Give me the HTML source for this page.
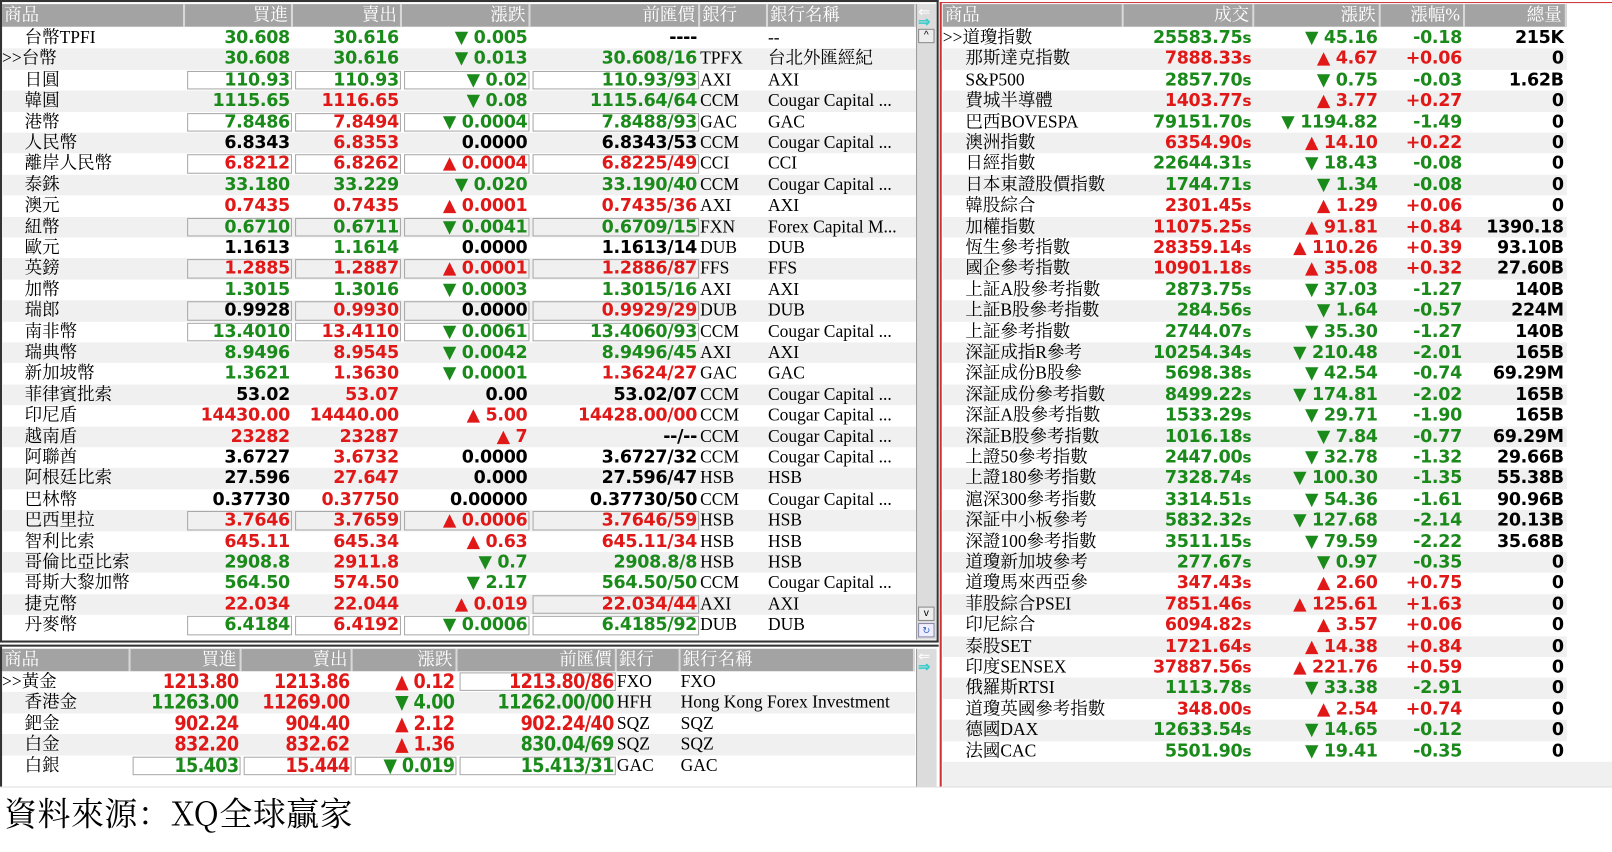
<!DOCTYPE html>
<html><head><meta charset="utf-8">
<style>
*{margin:0;padding:0;box-sizing:border-box}
html,body{width:1612px;height:852px;overflow:hidden;background:#fff}
#w{position:absolute;left:0;top:0;width:1568px;height:829px;transform:scale(1.0281);transform-origin:0 0}
.p{position:absolute;background:#fff}
.r{position:absolute;left:0;height:20.4px;display:flex;white-space:nowrap;font:bold 17px/20.4px "DejaVu Sans","Liberation Sans",sans-serif;letter-spacing:-0.3px}
.r:nth-child(odd){background:#f0f0f0}
.r>span{display:block;flex:none;text-align:right;padding-right:3px;position:relative;overflow:hidden}
.r>.n,.r>.b,.r>.m{text-align:left;font:17px/20.4px "Liberation Serif","Noto Serif CJK SC",serif;color:#000;padding-left:0;letter-spacing:0}
.r>.n{padding-left:22px}
.r>.n.s{padding-left:0}
.g{color:#1a8a1a}.d{color:#e01818}.k{color:#000}
.h{position:absolute;left:0;height:22px;display:flex;background:#a3a3a3;font:17px/22px "Liberation Serif","Noto Serif CJK SC",serif;color:#fff}
.h>span{flex:none;border-right:2px solid #d8d8d8;text-align:right;padding-right:3px}
.h>span.l{text-align:left;padding-left:2px}
.x>span.v::before{content:"";position:absolute;left:2px;right:1px;top:1px;bottom:1px;border:1px solid #a8a8a8}
.sb{position:absolute;background:#dcdcdc;border-left:1px solid #999}
.sfx{font-size:15px;font-style:normal}
.B{font:bold 19px/20.4px "DejaVu Sans Condensed","Liberation Sans Narrow","Liberation Sans",sans-serif;letter-spacing:-0.6px}
</style></head><body><div id="w">

<div class="p" style="left:0;top:0;width:913px;height:624px;border:2px double #333;border-bottom:none"></div>
<div class="h" style="top:4px;left:2px">
<span class="l" style="width:178px">商品</span><span style="width:105px">買進</span><span style="width:106px">賣出</span><span style="width:125px">漲跌</span><span style="width:165px">前匯價</span><span class="l" style="width:66px">銀行</span><span class="l" style="width:144px">銀行名稱</span>
</div>
<div class="sb" style="left:891px;top:4px;width:20px;height:618px"></div>
<div style="position:absolute;left:893px;top:5px;font:14px/12px sans-serif;color:#fff">⇐</div>
<div style="position:absolute;left:893px;top:16px;font:bold 14px/10px sans-serif;color:#3cc">⇒</div>
<div style="position:absolute;left:893px;top:28px;width:16px;height:14px;background:#eee;border:1px solid #888;font:10px/12px sans-serif;text-align:center">^</div>
<div style="position:absolute;left:893px;top:590px;width:16px;height:14px;background:#eee;border:1px solid #888;font:10px/12px sans-serif;text-align:center">v</div>
<div style="position:absolute;left:893px;top:606px;width:16px;height:14px;background:#eef;border:1px solid #88a;font:9px/12px sans-serif;text-align:center;color:#36c">↻</div>
<div style="position:absolute;left:2px;top:27px;width:889px">
<style>.L>span:nth-child(1){width:178px}.L>span:nth-child(2){width:105px}.L>span:nth-child(3){width:106px}.L>span:nth-child(4){width:125px}.L>span:nth-child(5){width:165px}.L>span:nth-child(6){width:66px}.L>span:nth-child(7){width:144px}</style>
<div class="r L" style="top:0"><span class="n">台幣TPFI</span><span class="g">30.608</span><span class="g">30.616</span><span class="g">▼ 0.005</span><span class="k">----</span><span class="b"></span><span class="m">--</span></div>
<div class="r L" style="top:20.4px"><span class="n s">&gt;&gt;台幣</span><span class="g">30.608</span><span class="g">30.616</span><span class="g">▼ 0.013</span><span class="g">30.608/16</span><span class="b">TPFX</span><span class="m">台北外匯經紀</span></div>
<div class="r L x" style="top:40.8px"><span class="n">日圓</span><span class="g v">110.93</span><span class="g v">110.93</span><span class="g v">▼ 0.02</span><span class="g v">110.93/93</span><span class="b">AXI</span><span class="m">AXI</span></div>
<div class="r L" style="top:61.2px"><span class="n">韓圓</span><span class="g">1115.65</span><span class="d">1116.65</span><span class="g">▼ 0.08</span><span class="g">1115.64/64</span><span class="b">CCM</span><span class="m">Cougar Capital ...</span></div>
<div class="r L x" style="top:81.6px"><span class="n">港幣</span><span class="g v">7.8486</span><span class="d v">7.8494</span><span class="g v">▼ 0.0004</span><span class="g v">7.8488/93</span><span class="b">GAC</span><span class="m">GAC</span></div>
<div class="r L" style="top:102px"><span class="n">人民幣</span><span class="k">6.8343</span><span class="d">6.8353</span><span class="k">0.0000</span><span class="k">6.8343/53</span><span class="b">CCM</span><span class="m">Cougar Capital ...</span></div>
<div class="r L x" style="top:122.4px"><span class="n">離岸人民幣</span><span class="d v">6.8212</span><span class="d v">6.8262</span><span class="d v">▲ 0.0004</span><span class="d v">6.8225/49</span><span class="b">CCI</span><span class="m">CCI</span></div>
<div class="r L" style="top:142.8px"><span class="n">泰銖</span><span class="g">33.180</span><span class="g">33.229</span><span class="g">▼ 0.020</span><span class="g">33.190/40</span><span class="b">CCM</span><span class="m">Cougar Capital ...</span></div>
<div class="r L" style="top:163.2px"><span class="n">澳元</span><span class="d">0.7435</span><span class="d">0.7435</span><span class="d">▲ 0.0001</span><span class="d">0.7435/36</span><span class="b">AXI</span><span class="m">AXI</span></div>
<div class="r L x" style="top:183.6px"><span class="n">紐幣</span><span class="g v">0.6710</span><span class="g v">0.6711</span><span class="g v">▼ 0.0041</span><span class="g v">0.6709/15</span><span class="b">FXN</span><span class="m">Forex Capital M...</span></div>
<div class="r L" style="top:204px"><span class="n">歐元</span><span class="k">1.1613</span><span class="g">1.1614</span><span class="k">0.0000</span><span class="k">1.1613/14</span><span class="b">DUB</span><span class="m">DUB</span></div>
<div class="r L x" style="top:224.4px"><span class="n">英鎊</span><span class="d v">1.2885</span><span class="d v">1.2887</span><span class="d v">▲ 0.0001</span><span class="d v">1.2886/87</span><span class="b">FFS</span><span class="m">FFS</span></div>
<div class="r L" style="top:244.8px"><span class="n">加幣</span><span class="g">1.3015</span><span class="g">1.3016</span><span class="g">▼ 0.0003</span><span class="g">1.3015/16</span><span class="b">AXI</span><span class="m">AXI</span></div>
<div class="r L x" style="top:265.2px"><span class="n">瑞郎</span><span class="k v">0.9928</span><span class="d v">0.9930</span><span class="k v">0.0000</span><span class="d v">0.9929/29</span><span class="b">DUB</span><span class="m">DUB</span></div>
<div class="r L x" style="top:285.6px"><span class="n">南非幣</span><span class="g v">13.4010</span><span class="d v">13.4110</span><span class="g v">▼ 0.0061</span><span class="g v">13.4060/93</span><span class="b">CCM</span><span class="m">Cougar Capital ...</span></div>
<div class="r L" style="top:306px"><span class="n">瑞典幣</span><span class="g">8.9496</span><span class="d">8.9545</span><span class="g">▼ 0.0042</span><span class="g">8.9496/45</span><span class="b">AXI</span><span class="m">AXI</span></div>
<div class="r L" style="top:326.4px"><span class="n">新加坡幣</span><span class="g">1.3621</span><span class="d">1.3630</span><span class="g">▼ 0.0001</span><span class="d">1.3624/27</span><span class="b">GAC</span><span class="m">GAC</span></div>
<div class="r L" style="top:346.8px"><span class="n">菲律賓批索</span><span class="k">53.02</span><span class="d">53.07</span><span class="k">0.00</span><span class="k">53.02/07</span><span class="b">CCM</span><span class="m">Cougar Capital ...</span></div>
<div class="r L" style="top:367.2px"><span class="n">印尼盾</span><span class="d">14430.00</span><span class="d">14440.00</span><span class="d">▲ 5.00</span><span class="d">14428.00/00</span><span class="b">CCM</span><span class="m">Cougar Capital ...</span></div>
<div class="r L" style="top:387.6px"><span class="n">越南盾</span><span class="d">23282</span><span class="d">23287</span><span class="d">▲ 7</span><span class="k">--/--</span><span class="b">CCM</span><span class="m">Cougar Capital ...</span></div>
<div class="r L" style="top:408px"><span class="n">阿聯酋</span><span class="k">3.6727</span><span class="d">3.6732</span><span class="k">0.0000</span><span class="k">3.6727/32</span><span class="b">CCM</span><span class="m">Cougar Capital ...</span></div>
<div class="r L" style="top:428.4px"><span class="n">阿根廷比索</span><span class="k">27.596</span><span class="d">27.647</span><span class="k">0.000</span><span class="k">27.596/47</span><span class="b">HSB</span><span class="m">HSB</span></div>
<div class="r L" style="top:448.8px"><span class="n">巴林幣</span><span class="k">0.37730</span><span class="d">0.37750</span><span class="k">0.00000</span><span class="k">0.37730/50</span><span class="b">CCM</span><span class="m">Cougar Capital ...</span></div>
<div class="r L x" style="top:469.2px"><span class="n">巴西里拉</span><span class="d v">3.7646</span><span class="d v">3.7659</span><span class="d v">▲ 0.0006</span><span class="d v">3.7646/59</span><span class="b">HSB</span><span class="m">HSB</span></div>
<div class="r L" style="top:489.6px"><span class="n">智利比索</span><span class="d">645.11</span><span class="d">645.34</span><span class="d">▲ 0.63</span><span class="d">645.11/34</span><span class="b">HSB</span><span class="m">HSB</span></div>
<div class="r L" style="top:510px"><span class="n">哥倫比亞比索</span><span class="g">2908.8</span><span class="d">2911.8</span><span class="g">▼ 0.7</span><span class="g">2908.8/8</span><span class="b">HSB</span><span class="m">HSB</span></div>
<div class="r L" style="top:530.4px"><span class="n">哥斯大黎加幣</span><span class="g">564.50</span><span class="d">574.50</span><span class="g">▼ 2.17</span><span class="g">564.50/50</span><span class="b">CCM</span><span class="m">Cougar Capital ...</span></div>
<div class="r L x" style="top:550.8px"><span class="n">捷克幣</span><span class="d">22.034</span><span class="d">22.044</span><span class="d">▲ 0.019</span><span class="d v">22.034/44</span><span class="b">AXI</span><span class="m">AXI</span></div>
<div class="r L x" style="top:571.2px"><span class="n">丹麥幣</span><span class="g v">6.4184</span><span class="d v">6.4192</span><span class="g v">▼ 0.0006</span><span class="g v">6.4185/92</span><span class="b">DUB</span><span class="m">DUB</span></div>
</div>
<div style="position:absolute;left:0;top:623px;width:913px;height:6px;border-top:2px solid #333;border-bottom:2px solid #333"></div>

<div class="h" style="top:631px;left:2px">
<span class="l" style="width:125px">商品</span><span style="width:108px">買進</span><span style="width:108px">賣出</span><span style="width:102px">漲跌</span><span style="width:155px">前匯價</span><span class="l" style="width:62px">銀行</span><span class="l" style="width:228px">銀行名稱</span>
</div>
<div class="sb" style="left:891px;top:631px;width:20px;height:134px"></div>
<div style="position:absolute;left:893px;top:632px;font:14px/12px sans-serif;color:#fff">⇐</div>
<div style="position:absolute;left:893px;top:643px;font:bold 14px/10px sans-serif;color:#3cc">⇒</div>
<div style="position:absolute;left:2px;top:653px;width:889px">
<style>.B>span:nth-child(1){width:125px}.B>span:nth-child(2){width:108px}.B>span:nth-child(3){width:108px}.B>span:nth-child(4){width:102px}.B>span:nth-child(5){width:155px}.B>span:nth-child(6){width:62px}.B>span:nth-child(7){width:228px}</style>
<div class="r B x" style="top:0;background:#fff"><span class="n s">&gt;&gt;黃金</span><span class="d">1213.80</span><span class="d">1213.86</span><span class="d">▲ 0.12</span><span class="d v">1213.80/86</span><span class="b">FXO</span><span class="m">FXO</span></div>
<div class="r B" style="top:20.4px;background:#f0f0f0"><span class="n">香港金</span><span class="g">11263.00</span><span class="d">11269.00</span><span class="g">▼ 4.00</span><span class="g">11262.00/00</span><span class="b">HFH</span><span class="m">Hong Kong Forex Investment</span></div>
<div class="r B" style="top:40.8px;background:#fff"><span class="n">鈀金</span><span class="d">902.24</span><span class="d">904.40</span><span class="d">▲ 2.12</span><span class="d">902.24/40</span><span class="b">SQZ</span><span class="m">SQZ</span></div>
<div class="r B" style="top:61.2px;background:#f0f0f0"><span class="n">白金</span><span class="d">832.20</span><span class="d">832.62</span><span class="d">▲ 1.36</span><span class="g">830.04/69</span><span class="b">SQZ</span><span class="m">SQZ</span></div>
<div class="r B x" style="top:81.6px;background:#fff"><span class="n">白銀</span><span class="g v">15.403</span><span class="d v">15.444</span><span class="g v">▼ 0.019</span><span class="g v">15.413/31</span><span class="b">GAC</span><span class="m">GAC</span></div>
</div>
<div style="position:absolute;left:0;top:629px;width:2px;height:137px;background:#333"></div>

<div style="position:absolute;left:914px;top:2px;width:2px;height:764px;background:#c33"></div>
<div style="position:absolute;left:914px;top:2px;width:654px;height:1px;background:#c33"></div>
<div class="h" style="top:4px;left:917px">
<span class="l" style="width:176px">商品</span><span style="width:127px">成交</span><span style="width:123px">漲跌</span><span style="width:82px">漲幅%</span><span style="width:99px">總量</span>
</div>
<div style="position:absolute;left:917px;top:27px;width:651px">
<style>.R>span:nth-child(1){width:176px}.R>span:nth-child(2){width:127px}.R>span:nth-child(3){width:123px}.R>span:nth-child(4){width:82px}.R>span:nth-child(5){width:99px;color:#000}.R{width:607px}</style>
<div class="r R" style="top:0"><span class="n s">&gt;&gt;道瓊指數</span><span class="g">25583.75<i class="sfx">s</i></span><span class="g">▼ 45.16</span><span class="g">-0.18</span><span>215K</span></div>
<div class="r R" style="top:20.4px"><span class="n">那斯達克指數</span><span class="d">7888.33<i class="sfx">s</i></span><span class="d">▲ 4.67</span><span class="d">+0.06</span><span>0</span></div>
<div class="r R" style="top:40.8px"><span class="n">S&amp;P500</span><span class="g">2857.70<i class="sfx">s</i></span><span class="g">▼ 0.75</span><span class="g">-0.03</span><span>1.62B</span></div>
<div class="r R" style="top:61.2px"><span class="n">費城半導體</span><span class="d">1403.77<i class="sfx">s</i></span><span class="d">▲ 3.77</span><span class="d">+0.27</span><span>0</span></div>
<div class="r R" style="top:81.6px"><span class="n">巴西BOVESPA</span><span class="g">79151.70<i class="sfx">s</i></span><span class="g">▼ 1194.82</span><span class="g">-1.49</span><span>0</span></div>
<div class="r R" style="top:102px"><span class="n">澳洲指數</span><span class="d">6354.90<i class="sfx">s</i></span><span class="d">▲ 14.10</span><span class="d">+0.22</span><span>0</span></div>
<div class="r R" style="top:122.4px"><span class="n">日經指數</span><span class="g">22644.31<i class="sfx">s</i></span><span class="g">▼ 18.43</span><span class="g">-0.08</span><span>0</span></div>
<div class="r R" style="top:142.8px"><span class="n">日本東證股價指數</span><span class="g">1744.71<i class="sfx">s</i></span><span class="g">▼ 1.34</span><span class="g">-0.08</span><span>0</span></div>
<div class="r R" style="top:163.2px"><span class="n">韓股綜合</span><span class="d">2301.45<i class="sfx">s</i></span><span class="d">▲ 1.29</span><span class="d">+0.06</span><span>0</span></div>
<div class="r R" style="top:183.6px"><span class="n">加權指數</span><span class="d">11075.25<i class="sfx">s</i></span><span class="d">▲ 91.81</span><span class="d">+0.84</span><span>1390.18</span></div>
<div class="r R" style="top:204px"><span class="n">恆生參考指數</span><span class="d">28359.14<i class="sfx">s</i></span><span class="d">▲ 110.26</span><span class="d">+0.39</span><span>93.10B</span></div>
<div class="r R" style="top:224.4px"><span class="n">國企參考指數</span><span class="d">10901.18<i class="sfx">s</i></span><span class="d">▲ 35.08</span><span class="d">+0.32</span><span>27.60B</span></div>
<div class="r R" style="top:244.8px"><span class="n">上証A股參考指數</span><span class="g">2873.75<i class="sfx">s</i></span><span class="g">▼ 37.03</span><span class="g">-1.27</span><span>140B</span></div>
<div class="r R" style="top:265.2px"><span class="n">上証B股參考指數</span><span class="g">284.56<i class="sfx">s</i></span><span class="g">▼ 1.64</span><span class="g">-0.57</span><span>224M</span></div>
<div class="r R" style="top:285.6px"><span class="n">上証參考指數</span><span class="g">2744.07<i class="sfx">s</i></span><span class="g">▼ 35.30</span><span class="g">-1.27</span><span>140B</span></div>
<div class="r R" style="top:306px"><span class="n">深証成指R參考</span><span class="g">10254.34<i class="sfx">s</i></span><span class="g">▼ 210.48</span><span class="g">-2.01</span><span>165B</span></div>
<div class="r R" style="top:326.4px"><span class="n">深証成份B股參</span><span class="g">5698.38<i class="sfx">s</i></span><span class="g">▼ 42.54</span><span class="g">-0.74</span><span>69.29M</span></div>
<div class="r R" style="top:346.8px"><span class="n">深証成份參考指數</span><span class="g">8499.22<i class="sfx">s</i></span><span class="g">▼ 174.81</span><span class="g">-2.02</span><span>165B</span></div>
<div class="r R" style="top:367.2px"><span class="n">深証A股參考指數</span><span class="g">1533.29<i class="sfx">s</i></span><span class="g">▼ 29.71</span><span class="g">-1.90</span><span>165B</span></div>
<div class="r R" style="top:387.6px"><span class="n">深証B股參考指數</span><span class="g">1016.18<i class="sfx">s</i></span><span class="g">▼ 7.84</span><span class="g">-0.77</span><span>69.29M</span></div>
<div class="r R" style="top:408px"><span class="n">上證50參考指數</span><span class="g">2447.00<i class="sfx">s</i></span><span class="g">▼ 32.78</span><span class="g">-1.32</span><span>29.66B</span></div>
<div class="r R" style="top:428.4px"><span class="n">上證180參考指數</span><span class="g">7328.74<i class="sfx">s</i></span><span class="g">▼ 100.30</span><span class="g">-1.35</span><span>55.38B</span></div>
<div class="r R" style="top:448.8px"><span class="n">滬深300參考指數</span><span class="g">3314.51<i class="sfx">s</i></span><span class="g">▼ 54.36</span><span class="g">-1.61</span><span>90.96B</span></div>
<div class="r R" style="top:469.2px"><span class="n">深証中小板參考</span><span class="g">5832.32<i class="sfx">s</i></span><span class="g">▼ 127.68</span><span class="g">-2.14</span><span>20.13B</span></div>
<div class="r R" style="top:489.6px"><span class="n">深證100參考指數</span><span class="g">3511.15<i class="sfx">s</i></span><span class="g">▼ 79.59</span><span class="g">-2.22</span><span>35.68B</span></div>
<div class="r R" style="top:510px"><span class="n">道瓊新加坡參考</span><span class="g">277.67<i class="sfx">s</i></span><span class="g">▼ 0.97</span><span class="g">-0.35</span><span>0</span></div>
<div class="r R" style="top:530.4px"><span class="n">道瓊馬來西亞參</span><span class="d">347.43<i class="sfx">s</i></span><span class="d">▲ 2.60</span><span class="d">+0.75</span><span>0</span></div>
<div class="r R" style="top:550.8px"><span class="n">菲股綜合PSEI</span><span class="d">7851.46<i class="sfx">s</i></span><span class="d">▲ 125.61</span><span class="d">+1.63</span><span>0</span></div>
<div class="r R" style="top:571.2px"><span class="n">印尼綜合</span><span class="d">6094.82<i class="sfx">s</i></span><span class="d">▲ 3.57</span><span class="d">+0.06</span><span>0</span></div>
<div class="r R" style="top:591.6px"><span class="n">泰股SET</span><span class="d">1721.64<i class="sfx">s</i></span><span class="d">▲ 14.38</span><span class="d">+0.84</span><span>0</span></div>
<div class="r R" style="top:612px"><span class="n">印度SENSEX</span><span class="d">37887.56<i class="sfx">s</i></span><span class="d">▲ 221.76</span><span class="d">+0.59</span><span>0</span></div>
<div class="r R" style="top:632.4px"><span class="n">俄羅斯RTSI</span><span class="g">1113.78<i class="sfx">s</i></span><span class="g">▼ 33.38</span><span class="g">-2.91</span><span>0</span></div>
<div class="r R" style="top:652.8px"><span class="n">道瓊英國參考指數</span><span class="d">348.00<i class="sfx">s</i></span><span class="d">▲ 2.54</span><span class="d">+0.74</span><span>0</span></div>
<div class="r R" style="top:673.2px"><span class="n">德國DAX</span><span class="g">12633.54<i class="sfx">s</i></span><span class="g">▼ 14.65</span><span class="g">-0.12</span><span>0</span></div>
<div class="r R" style="top:693.6px"><span class="n">法國CAC</span><span class="g">5501.90<i class="sfx">s</i></span><span class="g">▼ 19.41</span><span class="g">-0.35</span><span>0</span></div>
</div>
<div style="position:absolute;left:917px;top:741px;width:651px;height:25px;background:#f0f0f0"></div>
<div style="position:absolute;left:0;top:765px;width:1568px;height:1px;background:#ddd"></div>

<div style="position:absolute;left:4px;top:770px;font:32px/40px 'Noto Serif CJK SC','Liberation Serif',serif;color:#000;letter-spacing:0.5px">資料來源：XQ全球贏家</div>
</div></body></html>
